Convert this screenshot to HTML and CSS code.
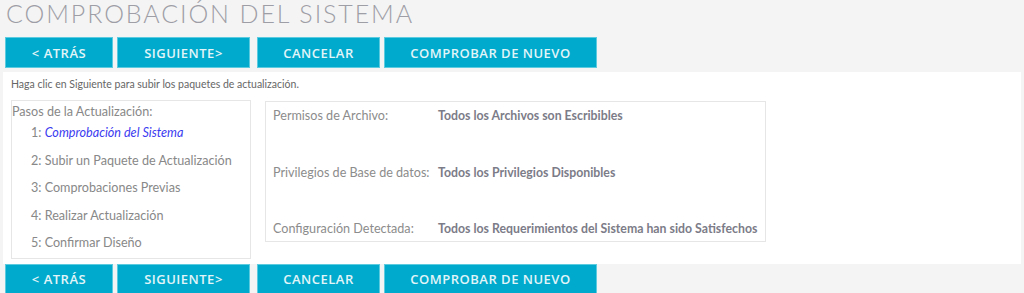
FILE: index.html
```html
<!DOCTYPE html>
<html lang="es">
<head>
    <meta charset="UTF-8">
    <title>Comprobación del Sistema</title>
    <link rel="stylesheet" href="styles.css">
</head>
<body>
    <h1 class="page-title">COMPROBACIÓN DEL SISTEMA</h1>

    <div class="button-bar">
        <div class="button-group">
            <button class="btn btn-back">&lt; ATRÁS</button>
            <button class="btn btn-next">SIGUIENTE&gt;</button>
        </div>
        <div class="button-group">
            <button class="btn btn-cancel">CANCELAR</button>
            <button class="btn btn-recheck">COMPROBAR DE NUEVO</button>
        </div>
    </div>

    <div class="panel">
        <p class="hint">Haga clic en Siguiente para subir los paquetes de actualización.</p>
        <div class="panel-body">
            <div class="steps">
                <div class="steps-title">Pasos de la Actualización:</div>
                <ul class="steps-list">
                    <li>1: <em class="current">Comprobación del Sistema</em></li>
                    <li>2: Subir un Paquete de Actualización</li>
                    <li>3: Comprobaciones Previas</li>
                    <li>4: Realizar Actualización</li>
                    <li>5: Confirmar Diseño</li>
                </ul>
            </div>
            <div class="checks">
                <div class="check-label">Permisos de Archivo:</div>
                <div class="check-value">Todos los Archivos son Escribibles</div>
                <div class="check-label">Privilegios de Base de datos:</div>
                <div class="check-value">Todos los Privilegios Disponibles</div>
                <div class="check-label">Configuración Detectada:</div>
                <div class="check-value">Todos los Requerimientos del Sistema han sido Satisfechos</div>
            </div>
        </div>
    </div>

    <div class="button-bar button-bar-bottom">
        <div class="button-group">
            <button class="btn btn-back">&lt; ATRÁS</button>
            <button class="btn btn-next">SIGUIENTE&gt;</button>
        </div>
        <div class="button-group">
            <button class="btn btn-cancel">CANCELAR</button>
            <button class="btn btn-recheck">COMPROBAR DE NUEVO</button>
        </div>
    </div>
</body>
</html>
```

FILE: styles.css
```css
body {
    margin: 0;
    background-color: #f4f4f4;
    font-family: Lato, 'Open Sans', sans-serif;
    color: #888;
}
.page-title {
    margin: 0;
    padding-left: 6px;
    font-size: 25px;
    line-height: 26px;
    font-weight: 300;
    letter-spacing: 1.9px;
    color: #9e9ea6;
}
.button-bar {
    display: flex;
    gap: 7px;
    margin-top: 11px;
    padding-left: 5px;
}
.button-bar-bottom {
    margin-top: 0;
}
.button-group {
    display: flex;
    gap: 4px;
}
.btn {
    height: 31px;
    padding: 0;
    background-color: #00aacc;
    border: 1px solid #5ccbe0;
    color: #e2f5f9;
    font-family: 'Open Sans', sans-serif;
    font-size: 13px;
    font-weight: 600;
    letter-spacing: 0.5px;
    cursor: pointer;
}
.btn-back {
    width: 108px;
}
.btn-next {
    width: 133px;
}
.btn-cancel {
    width: 123px;
}
.btn-recheck {
    width: 213px;
}
.panel {
    margin: 4px 3px 0 3px;
    padding: 5px 0 5px 8px;
    background-color: #fff;
}
.hint {
    margin: 0;
    font-size: 10.5px;
    line-height: 14px;
    color: #666;
}
.panel-body {
    display: flex;
    align-items: flex-start;
    gap: 14px;
    margin-top: 9px;
}
.steps {
    width: 238px;
    padding: 4px 0 1px 0;
    border: 1px solid #e6e6e6;
    font-size: 12.6px;
}
.steps-title {
    line-height: 14px;
    color: #888;
}
.steps-list {
    margin: 0;
    padding-left: 19px;
    list-style: none;
}
.steps-list li {
    line-height: 27.5px;
    color: #888;
}
.current {
    color: #3b3bf0;
}
.checks {
    display: grid;
    grid-template-columns: 165px auto;
    row-gap: 38.5px;
    width: 484px;
    margin-top: 1px;
    padding: 5px 8px 3px 7px;
    border: 1px solid #e6e6e6;
    font-size: 12.6px;
    line-height: 18px;
    white-space: nowrap;
}
.check-label {
    color: #8c8c8c;
}
.check-value {
    font-size: 12.3px;
    font-weight: 700;
    color: #7c7c88;
}
```
